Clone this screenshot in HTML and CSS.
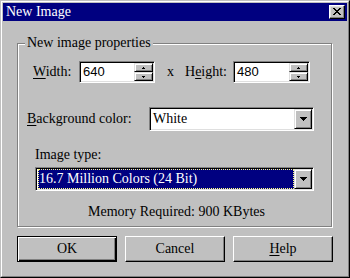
FILE: index.html
```html
<!DOCTYPE html>
<html>
<head>
<meta charset="utf-8">
<link rel="stylesheet" href="styles.css">
</head>
<body>
<div class="window">
  <div class="frame">
    <div class="titlebar">
      <span class="title">New Image</span>
      <span class="close-btn">
        <svg width="8" height="7" viewBox="0 0 8 7" shape-rendering="crispEdges"><path fill="#000" d="M0 0h2v1H0zM6 0h2v1H6zM1 1h2v1H1zM5 1h2v1H5zM2 2h4v1H2zM3 3h2v1H3zM2 4h4v1H2zM1 5h2v1H1zM5 5h2v1H5zM0 6h2v1H0zM6 6h2v1H6z"/></svg>
      </span>
    </div>
    <div class="body">
      <div class="group">
        <div class="group-title">New image properties</div>
        <div class="size-row">
          <span class="lbl lbl-width"><u>W</u>idth:</span>
          <div class="field spin-field spin-width">
            <span class="value">640</span>
            <div class="spin">
              <span class="spin-btn"><svg width="3" height="2" viewBox="0 0 3 2" shape-rendering="crispEdges"><path d="M1 0h1v1H1zM0 1h3v1H0z"/></svg></span>
              <span class="spin-btn"><svg width="3" height="2" viewBox="0 0 3 2" shape-rendering="crispEdges"><path d="M0 0h3v1H0zM1 1h1v1H1z"/></svg></span>
            </div>
          </div>
          <span class="times">x</span>
          <span class="lbl lbl-height">H<u>e</u>ight:</span>
          <div class="field spin-field spin-height">
            <span class="value">480</span>
            <div class="spin">
              <span class="spin-btn"><svg width="3" height="2" viewBox="0 0 3 2" shape-rendering="crispEdges"><path d="M1 0h1v1H1zM0 1h3v1H0z"/></svg></span>
              <span class="spin-btn"><svg width="3" height="2" viewBox="0 0 3 2" shape-rendering="crispEdges"><path d="M0 0h3v1H0zM1 1h1v1H1z"/></svg></span>
            </div>
          </div>
        </div>
        <div class="bg-row">
          <span class="lbl lbl-bg"><u>B</u>ackground color:</span>
          <div class="field combo bg-combo">
            <span class="combo-text">White</span>
            <span class="drop-btn"><svg width="7" height="4" viewBox="0 0 7 4" shape-rendering="crispEdges"><path d="M0 0h7v1H0zM1 1h5v1H1zM2 2h3v1H2zM3 3h1v1H3z"/></svg></span>
          </div>
        </div>
        <div class="type-label">Image type:</div>
        <div class="field combo type-combo">
          <span class="combo-sel">16.7 Million Colors (24 Bit)</span>
          <span class="drop-btn"><svg width="7" height="4" viewBox="0 0 7 4" shape-rendering="crispEdges"><path d="M0 0h7v1H0zM1 1h5v1H1zM2 2h3v1H2zM3 3h1v1H3z"/></svg></span>
        </div>
        <div class="memory">Memory Required: 900 KBytes</div>
      </div>
      <div class="buttons">
        <span class="btn btn-default">OK</span>
        <span class="btn">Cancel</span>
        <span class="btn"><u>H</u>elp</span>
      </div>
    </div>
  </div>
</div>
</body>
</html>
```
FILE: styles.css
```css
* { box-sizing: border-box; }
html, body { margin: 0; padding: 0; background: #c0c0c0; }
body {
  font-family: "Liberation Serif", "Times New Roman", serif;
  font-size: 14px;
  color: #000;
}
u { text-decoration: underline; text-underline-offset: 2px; }

.window {
  width: 350px;
  height: 278px;
  background: #c0c0c0;
  border: 1px solid;
  border-color: #c0c0c0 #000 #000 #c0c0c0;
}
.frame {
  height: 276px;
  border: 1px solid;
  border-color: #fff #808080 #808080 #fff;
  padding: 1px;
}
.titlebar {
  height: 18px;
  background: #000080;
  color: #fff;
  display: flex;
  align-items: center;
  padding-left: 3px;
  line-height: 18px;
}
.close-btn {
  margin-left: auto;
  margin-right: 2px;
  width: 16px;
  height: 14px;
  background: #c0c0c0;
  border: 1px solid;
  border-color: #fff #000 #000 #fff;
  box-shadow: inset -1px -1px 0 #808080, inset 1px 1px 0 #dfdfdf;
  display: flex;
  align-items: center;
  justify-content: center;
  padding: 0 1px 1px 0;
}
.close-btn svg { display: block; }

.body {
  padding: 22px 0 0 14px;
}
.group {
  width: 315px;
  height: 184px;
  border: 1px solid #808080;
  box-shadow: 1px 1px 0 #fff, inset 1px 1px 0 #fff;
  display: flex;
  flex-direction: column;
  align-items: flex-start;
}
.group-title {
  margin: -9px 0 0 7px;
  padding: 0 2px;
  background: #c0c0c0;
  line-height: 16px;
  height: 16px;
}
.lbl { line-height: 16px; white-space: nowrap; }

.size-row {
  margin-top: 10px;
  padding-left: 15px;
  height: 22px;
  display: flex;
  align-items: center;
}
.lbl-width { width: 46px; }
.times { margin-left: 12px; width: 18px; line-height: 16px; }
.lbl-height { width: 48px; }

.field {
  background: #fff;
  border: 1px solid;
  border-color: #808080 #fff #fff #808080;
  box-shadow: inset 1px 1px 0 #000, inset -1px -1px 0 #dfdfdf;
  padding: 1px;
  display: flex;
}
.spin-field { height: 22px; }
.spin-width { width: 76px; }
.spin-height { width: 77px; }
.value {
  flex: 1;
  font-family: "Liberation Sans", Arial, sans-serif;
  font-size: 13px;
  line-height: 18px;
  padding-left: 2px;
}
.spin {
  width: 19px;
  display: flex;
  flex-direction: column;
}
.spin-btn, .drop-btn, .btn {
  background: #c0c0c0;
  border: 1px solid;
  border-color: #dfdfdf #000 #000 #dfdfdf;
  box-shadow: inset 1px 1px 0 #fff, inset -1px -1px 0 #808080;
  display: flex;
  align-items: center;
  justify-content: center;
}
.spin-btn { height: 9px; }
.spin-btn svg, .drop-btn svg { display: block; }

.bg-row {
  margin-top: 24px;
  padding-left: 9px;
  display: flex;
  align-items: center;
}
.lbl-bg { width: 122px; }
.combo { height: 24px; }
.bg-combo { width: 165px; }
.combo-text {
  flex: 1;
  line-height: 20px;
  padding-left: 2px;
}
.drop-btn { width: 18px; height: 20px; }

.type-label {
  margin: 16px 0 0 17px;
  line-height: 16px;
}
.type-combo {
  margin: 4px 0 0 17px;
  width: 279px;
}
.combo-sel {
  flex: 1;
  margin-left: 1px;
  background: #000080;
  color: #fff;
  line-height: 20px;
  padding-left: 1px;
  outline: 1px dotted #ffff80;
  outline-offset: -1px;
}

.memory {
  align-self: stretch;
  margin-top: 13px;
  text-align: center;
  line-height: 16px;
  padding-left: 4px;
}

.buttons {
  margin-top: 9px;
  display: flex;
  gap: 8px;
}
.btn {
  width: 100px;
  height: 26px;
  border-color: #fff #000 #000 #fff;
  box-shadow: inset -1px -1px 0 #808080;
  line-height: 16px;
}
.btn-default {
  border-color: #000;
  box-shadow: inset 1px 1px 0 #fff, inset -1px -1px 0 #000, inset -2px -2px 0 #808080;
}
```
